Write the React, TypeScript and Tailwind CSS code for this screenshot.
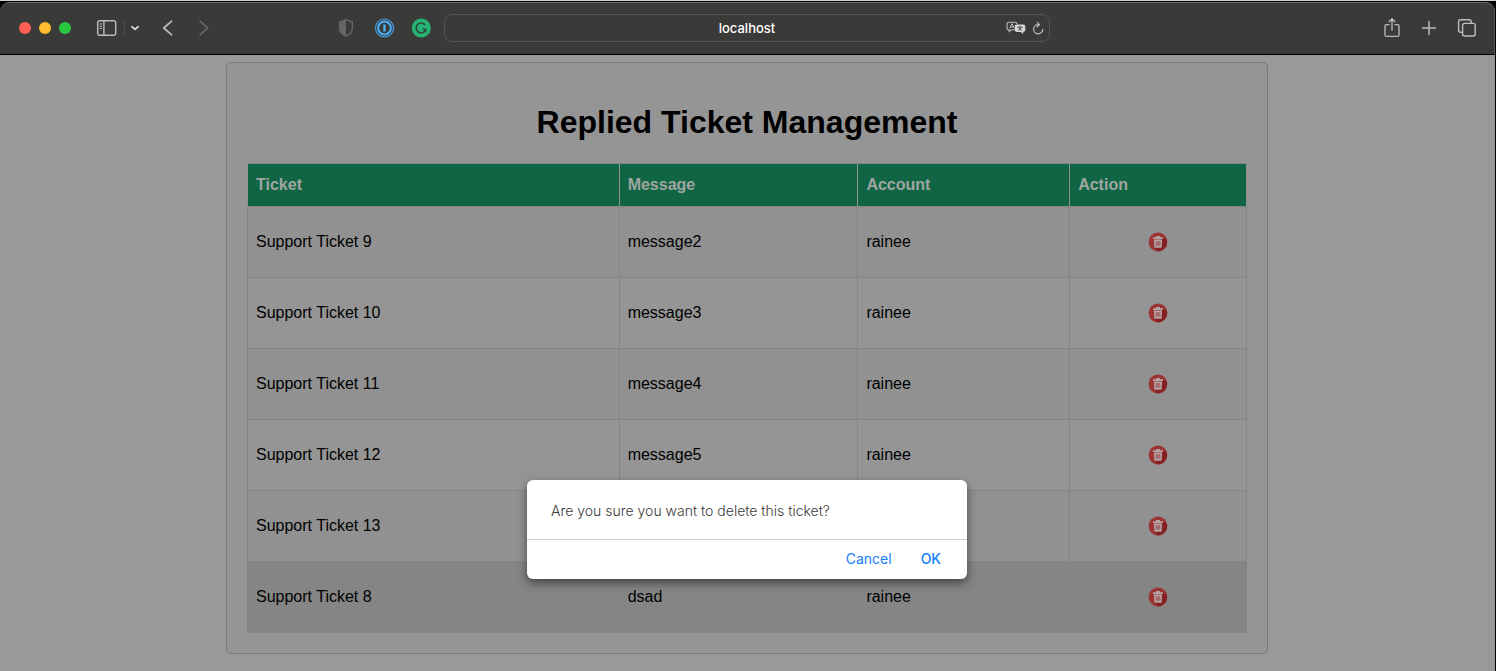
import React from "react";

const tickets = [
  { ticket: "Support Ticket 9", message: "message2", account: "rainee" },
  { ticket: "Support Ticket 10", message: "message3", account: "rainee" },
  { ticket: "Support Ticket 11", message: "message4", account: "rainee" },
  { ticket: "Support Ticket 12", message: "message5", account: "rainee" },
  { ticket: "Support Ticket 13", message: "message6", account: "rainee" },
  { ticket: "Support Ticket 8", message: "dsad", account: "rainee", active: true },
];

function TrashIcon() {
  return (
    <svg className="block" width="20" height="20" viewBox="0 0 20 20" aria-hidden="true">
      <circle cx="10" cy="10" r="9.4" fill="#9b3432" />
      <path d="M15 5.5 L18.6 7.5 A9.4 9.4 0 0 1 10 19.4 L6.5 15.5 Z" fill="#842022" />
      <path d="M5 5.2h3V4h4v1.2h3v1.7H5zM5.9 7.4h8.2l-.5 8.4H6.4z" fill="#b3a3a3" />
      <rect x="7.6" y="9.2" width="4.8" height="4.4" fill="#a36b6c" />
    </svg>
  );
}

function BrowserBar() {
  return (
    <header className="border-t border-[#c5d5c8] bg-black pt-px">
      <div className="mr-px grid h-[53px] grid-cols-[1fr_minmax(300px,606px)_1fr] items-center rounded-t-[9px] border-t border-r border-b border-t-[#696967] border-r-[#555553] border-b-black bg-[#3a3a38] pb-0.5 text-[#bdbdbb]">
        <div className="flex items-center justify-between pr-[13px] pl-[19px]">
          <div className="flex items-center">
            <div className="flex gap-2">
              <button aria-label="Close window" className="size-3 rounded-full bg-[#ff5f57]" />
              <button aria-label="Minimize window" className="size-3 rounded-full bg-[#febc2e]" />
              <button aria-label="Zoom window" className="size-3 rounded-full bg-[#28c840]" />
            </div>
            <button aria-label="Sidebar" className="ml-[25px]">
              <svg className="block" width="21" height="18" viewBox="0 0 21 18" fill="none" stroke="currentColor" strokeWidth="1.4">
                <rect x="1.7" y="1.7" width="18" height="14.6" rx="2" />
                <path d="M7.9 1.7v14.6" />
                <path d="M3.7 5h2.3M3.7 7.3h2.3M3.7 9.6h2.3" strokeWidth="1" />
              </svg>
            </button>
            <span className="ml-[7px] h-[18px] w-px bg-[#4d4d4b]" />
            <button aria-label="Tab groups" className="ml-[5px] text-[#e0e0de]">
              <svg className="block" width="10" height="10" viewBox="0 0 10 10" fill="none" stroke="currentColor" strokeWidth="1.6" strokeLinecap="round" strokeLinejoin="round">
                <path d="M1.9 3.6 5 6.4 8.1 3.6" />
              </svg>
            </button>
            <button aria-label="Back" className="ml-[22px]">
              <svg className="block" width="12" height="18" viewBox="0 0 12 18" fill="none" stroke="currentColor" strokeWidth="1.7" strokeLinecap="round" strokeLinejoin="round">
                <path d="M9.6 2.2 1.8 9l7.8 6.8" />
              </svg>
            </button>
            <button aria-label="Forward" className="ml-6 text-[#636361]">
              <svg className="block" width="12" height="18" viewBox="0 0 12 18" fill="none" stroke="currentColor" strokeWidth="1.7" strokeLinecap="round" strokeLinejoin="round">
                <path d="M2 2.2 9.8 9 2 15.8" />
              </svg>
            </button>
          </div>
          <div className="flex items-center gap-[17px]">
            <button aria-label="Privacy report" className="text-[#666664]">
              <svg className="block" width="20" height="20" viewBox="0 0 20 20">
                <path d="M9 1.7 15.3 4v6.4c0 3.2-2.3 5.6-6.3 7.7-4-2.1-6.3-4.5-6.3-7.7V4z" fill="none" stroke="currentColor" strokeWidth="1.4" />
                <path d="M9 1.2 2.2 3.7v6.7c0 3.6 2.6 6 6.8 8.2z" fill="currentColor" />
              </svg>
            </button>
            <button aria-label="1Password">
              <svg className="block" width="20" height="20" viewBox="0 0 20 20">
                <circle cx="10.5" cy="10" r="9" fill="none" stroke="#46a5ee" strokeWidth="1.1" />
                <circle cx="10.5" cy="10" r="6.4" fill="none" stroke="#4cb0fa" strokeWidth="2" />
                <path d="M9.3 6.5h2.4v7H9.3z" fill="#4cb0fa" />
              </svg>
            </button>
            <button aria-label="Grammarly">
              <svg className="block" width="20" height="20" viewBox="0 0 20 20">
                <circle cx="10.3" cy="10" r="9.5" fill="#24b574" />
                <path d="M14 6.9A4.9 4.9 0 1 0 14.8 11.4" fill="none" stroke="#31483b" strokeWidth="1.7" />
                <path d="M10.9 10.6h4.5v4.5l-1.5-1.5-1.2-1.6z" fill="#31483b" />
              </svg>
            </button>
          </div>
        </div>

        <div className="relative">
          <input
            aria-label="Address"
            defaultValue="localhost"
            className="block h-7 w-full rounded-lg border border-[#545452] bg-transparent text-center font-[Inter,sans-serif] text-[13px] font-medium text-white outline-none"
          />
          <div className="absolute inset-y-0 right-[5px] flex items-center gap-[5px]">
            <button aria-label="Translate">
              <svg className="block" width="20" height="14" viewBox="0 0 20 14" fill="none">
                <path d="M8.5 8.8H5.2L3.2 10.6V8.8C1.7 8.8 1 8.1 1 6.8V3.2c0-1.3.7-2 2-2h6c1.3 0 2 .7 2 2" stroke="#bdbdbb" strokeWidth="1.1" />
                <path d="M3.8 7.3 6 2.6l2.2 4.7M4.6 5.9h2.8" stroke="#bdbdbb" strokeWidth="1" />
                <path d="M11 3.4h6c1.5 0 2.3.8 2.3 2.2v3.2c0 1.4-.8 2.1-2.1 2.1v2.2l-2.4-2.2H11c-1.5 0-2.3-.7-2.3-2.1V5.6c0-1.4.8-2.2 2.3-2.2z" fill="#d6d6d4" />
                <path d="M11.3 6.2h5.4M14 5v1.2M12 9.4c1.6-.6 2.6-1.7 3-3.2M12.9 6.6c.5 1.4 1.5 2.3 3 2.8" stroke="#3a3a38" strokeWidth=".9" />
              </svg>
            </button>
            <button aria-label="Reload">
              <svg className="block" width="14" height="14" viewBox="0 0 14 14" fill="none" stroke="currentColor" strokeWidth="1.2" strokeLinecap="round" strokeLinejoin="round">
                <path d="M8.2 3.6H7.3A4.6 4.6 0 1 0 11.8 8.4" />
                <path d="M6.2 1.4 8.5 3.6 6.2 5.9" />
              </svg>
            </button>
          </div>
        </div>

        <div className="flex items-center justify-end gap-5 pr-[17px]">
          <button aria-label="Share">
            <svg className="block" width="18" height="22" viewBox="0 0 18 22" fill="none" stroke="currentColor" strokeWidth="1.3" strokeLinecap="round" strokeLinejoin="round">
              <path d="M6 7.7H3.6c-1 0-1.6.5-1.6 1.5v8.7c0 1 .6 1.5 1.6 1.5h10.8c1 0 1.6-.5 1.6-1.5V9.2c0-1-.6-1.5-1.6-1.5H12M9 13.3V2M6.1 4.7 9 1.8l2.9 2.9" />
            </svg>
          </button>
          <button aria-label="New tab">
            <svg className="block" width="16" height="16" viewBox="0 0 16 16" fill="none" stroke="currentColor" strokeWidth="1.5" strokeLinecap="round">
              <path d="M8 1.6v12.8M1.6 8h12.8" />
            </svg>
          </button>
          <button aria-label="Tab overview">
            <svg className="block" width="20" height="20" viewBox="0 0 20 20" fill="none" stroke="currentColor" strokeWidth="1.4">
              <rect x="5.6" y="5.4" width="12.6" height="12.6" rx="2" />
              <path d="M5.6 14.2H3.5c-1.2 0-1.9-.6-1.9-1.8V3.6c0-1.2.7-1.9 1.9-1.9h8.7c1.2 0 1.9.7 1.9 1.9v1.8" />
            </svg>
          </button>
        </div>
      </div>
    </header>
  );
}

export default function App() {
  return (
    <div className="relative flex min-h-screen flex-col bg-[#999999] font-['Liberation_Sans',Arial,sans-serif] text-base text-black">
      <BrowserBar />
      <main className="flex-1 border-r border-r-black pt-[7px] pr-px pb-4">
        <section className="mx-auto w-full max-w-[1042px] rounded-[5px] border border-[#7a7a7a] bg-[#959595] px-5 pb-5">
          <h1 className="pt-10 pb-[22px] text-center text-[32px] leading-[38px] font-bold">Replied Ticket Management</h1>
          <table className="w-full table-fixed border-collapse">
            <colgroup>
              <col className="w-[37.2%]" />
              <col className="w-[23.9%]" />
              <col className="w-[21.2%]" />
              <col className="w-[17.7%]" />
            </colgroup>
            <thead>
              <tr className="h-[43px] bg-[#106644] text-left text-[#a0a5a2]">
                {["Ticket", "Message", "Account", "Action"].map((label) => (
                  <th key={label} scope="col" className="border border-[#858585] border-x-[#929292] px-2 font-bold">
                    {label}
                  </th>
                ))}
              </tr>
            </thead>
            <tbody>
              {tickets.map((t) => (
                <tr key={t.ticket} className={t.active ? "h-[71px] bg-[#858585]" : "h-[71px] odd:bg-[#919191]"}>
                  <td className="border border-[#858585] px-2">{t.ticket}</td>
                  <td className="border border-[#858585] px-2">{t.message}</td>
                  <td className="border border-[#858585] px-2">{t.account}</td>
                  <td className="border border-[#858585] px-2">
                    <button aria-label={`Delete ${t.ticket}`} className="mx-auto block">
                      <TrashIcon />
                    </button>
                  </td>
                </tr>
              ))}
            </tbody>
          </table>
        </section>
      </main>

      <div className="absolute inset-x-0 top-[480px] flex justify-center pr-0.5">
        <div
          role="alertdialog"
          aria-labelledby="confirm-text"
          className="w-[440px] rounded-md bg-white font-[Inter,sans-serif] text-sm shadow-[0_4px_10px_rgba(0,0,0,0.5)]"
        >
          <p id="confirm-text" className="border-b border-[#cfcfcf] px-6 pt-[21px] pb-[18px] leading-5 font-light text-[#3a3a3a]">
            Are you sure you want to delete this ticket?
          </p>
          <div className="flex h-[39px] items-center justify-end gap-[29px] pr-[26px] pb-px text-[#157efb]">
            <button>Cancel</button>
            <button className="font-medium">OK</button>
          </div>
        </div>
      </div>
    </div>
  );
}
